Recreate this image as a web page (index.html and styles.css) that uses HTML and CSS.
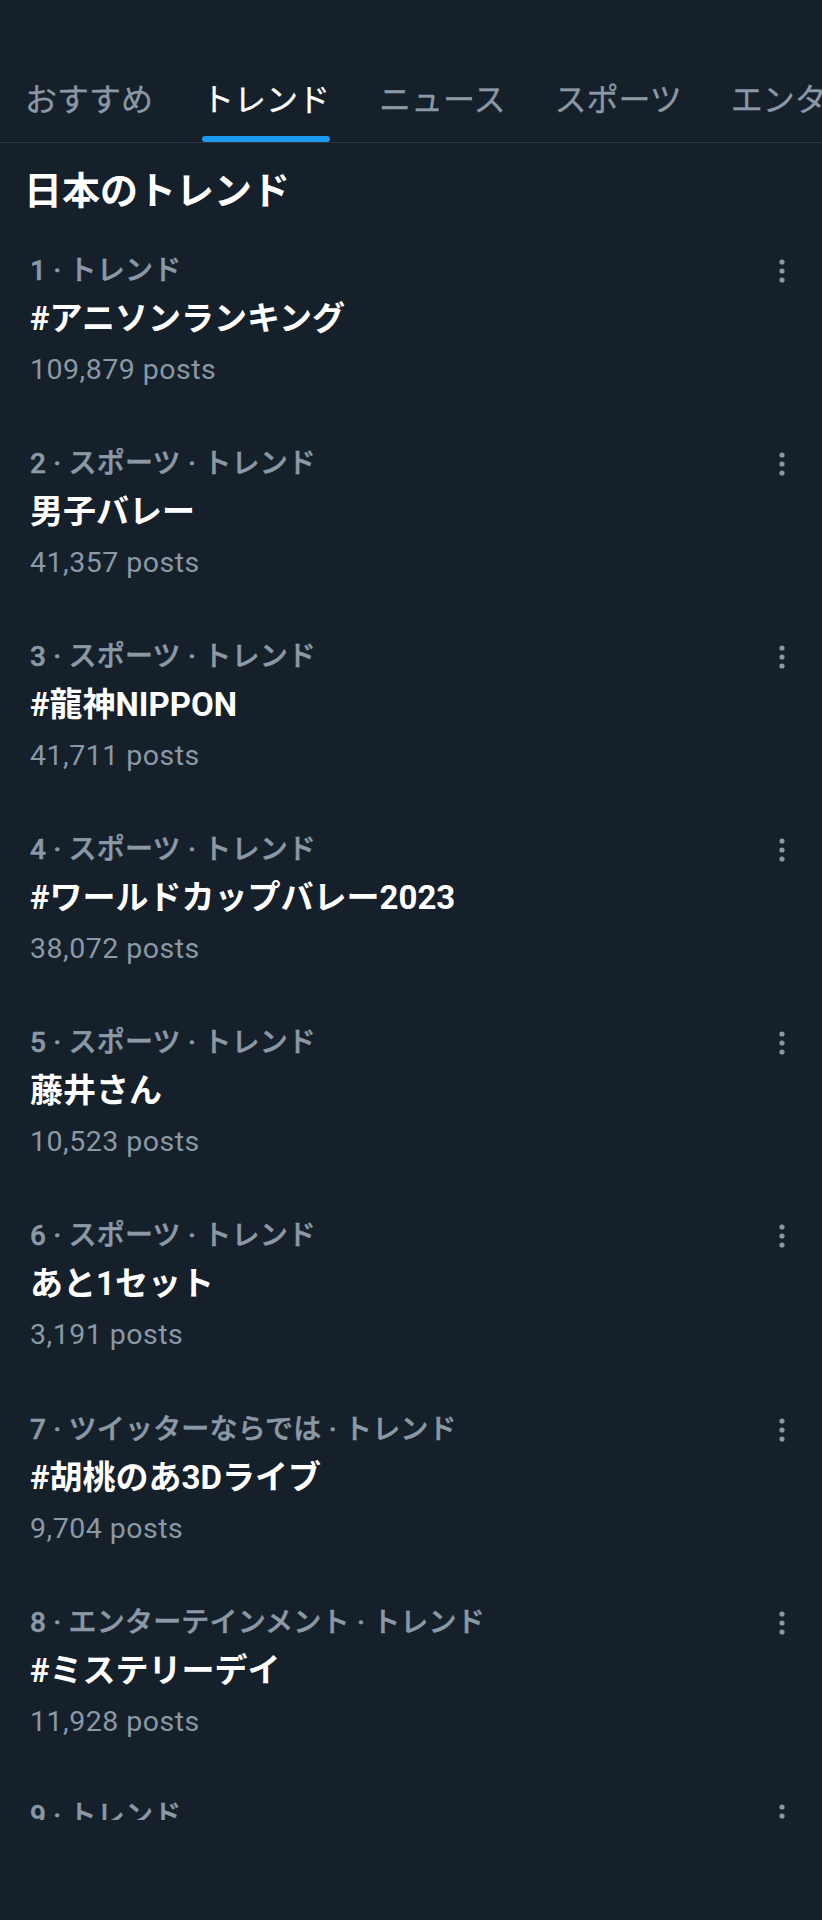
FILE: index.html
```html
<!DOCTYPE html>
<html lang="ja">
<head>
<meta charset="utf-8">
<title>トレンド</title>
<link rel="stylesheet" href="styles.css">
</head>
<body>
<div class="page">
  <nav class="tabs">
    <div class="tab"><span class="tab-label">おすすめ</span><span class="tab-bar"></span></div>
    <div class="tab active"><span class="tab-label">トレンド</span><span class="tab-bar"></span></div>
    <div class="tab"><span class="tab-label">ニュース</span><span class="tab-bar"></span></div>
    <div class="tab"><span class="tab-label">スポーツ</span><span class="tab-bar"></span></div>
    <div class="tab"><span class="tab-label">エンタメ</span><span class="tab-bar"></span></div>
  </nav>
  <h1 class="section-title">日本のトレンド</h1>
  <ul class="trends">
    <li class="trend">
      <div class="meta-row"><span class="meta">1 · トレンド</span><svg class="more" viewBox="0 0 10 24" width="10" height="24"><circle cx="5" cy="3" r="2.6"/><circle cx="5" cy="12" r="2.6"/><circle cx="5" cy="21" r="2.6"/></svg></div>
      <div class="name">#アニソンランキング</div>
      <div class="count">109,879 posts</div>
    </li>
    <li class="trend">
      <div class="meta-row"><span class="meta">2 · スポーツ · トレンド</span><svg class="more" viewBox="0 0 10 24" width="10" height="24"><circle cx="5" cy="3" r="2.6"/><circle cx="5" cy="12" r="2.6"/><circle cx="5" cy="21" r="2.6"/></svg></div>
      <div class="name">男子バレー</div>
      <div class="count">41,357 posts</div>
    </li>
    <li class="trend">
      <div class="meta-row"><span class="meta">3 · スポーツ · トレンド</span><svg class="more" viewBox="0 0 10 24" width="10" height="24"><circle cx="5" cy="3" r="2.6"/><circle cx="5" cy="12" r="2.6"/><circle cx="5" cy="21" r="2.6"/></svg></div>
      <div class="name">#龍神NIPPON</div>
      <div class="count">41,711 posts</div>
    </li>
    <li class="trend">
      <div class="meta-row"><span class="meta">4 · スポーツ · トレンド</span><svg class="more" viewBox="0 0 10 24" width="10" height="24"><circle cx="5" cy="3" r="2.6"/><circle cx="5" cy="12" r="2.6"/><circle cx="5" cy="21" r="2.6"/></svg></div>
      <div class="name">#ワールドカップバレー2023</div>
      <div class="count">38,072 posts</div>
    </li>
    <li class="trend">
      <div class="meta-row"><span class="meta">5 · スポーツ · トレンド</span><svg class="more" viewBox="0 0 10 24" width="10" height="24"><circle cx="5" cy="3" r="2.6"/><circle cx="5" cy="12" r="2.6"/><circle cx="5" cy="21" r="2.6"/></svg></div>
      <div class="name">藤井さん</div>
      <div class="count">10,523 posts</div>
    </li>
    <li class="trend">
      <div class="meta-row"><span class="meta">6 · スポーツ · トレンド</span><svg class="more" viewBox="0 0 10 24" width="10" height="24"><circle cx="5" cy="3" r="2.6"/><circle cx="5" cy="12" r="2.6"/><circle cx="5" cy="21" r="2.6"/></svg></div>
      <div class="name">あと1セット</div>
      <div class="count">3,191 posts</div>
    </li>
    <li class="trend">
      <div class="meta-row"><span class="meta">7 · ツイッターならでは · トレンド</span><svg class="more" viewBox="0 0 10 24" width="10" height="24"><circle cx="5" cy="3" r="2.6"/><circle cx="5" cy="12" r="2.6"/><circle cx="5" cy="21" r="2.6"/></svg></div>
      <div class="name">#胡桃のあ3Dライブ</div>
      <div class="count">9,704 posts</div>
    </li>
    <li class="trend">
      <div class="meta-row"><span class="meta">8 · エンターテインメント · トレンド</span><svg class="more" viewBox="0 0 10 24" width="10" height="24"><circle cx="5" cy="3" r="2.6"/><circle cx="5" cy="12" r="2.6"/><circle cx="5" cy="21" r="2.6"/></svg></div>
      <div class="name">#ミステリーデイ</div>
      <div class="count">11,928 posts</div>
    </li>
    <li class="trend">
      <div class="meta-row"><span class="meta">9 · トレンド</span><svg class="more" viewBox="0 0 10 24" width="10" height="24"><circle cx="5" cy="3" r="2.6"/><circle cx="5" cy="12" r="2.6"/><circle cx="5" cy="21" r="2.6"/></svg></div>
      <div class="name">&nbsp;</div>
      <div class="count">&nbsp;</div>
    </li>
  </ul>
</div>
</body>
</html>
```

FILE: styles.css
```css
html, body {
  margin: 0;
  padding: 0;
  background: #15202b;
}

body {
  font-family: Roboto, "Noto Sans CJK JP", sans-serif;
  color: #ffffff;
}

.page {
  height: 1820px;
  overflow: hidden;
  background: #15202b;
}

.tabs {
  display: flex;
  align-items: flex-end;
  gap: 49px;
  height: 142px;
  padding: 0 0 0 25px;
  border-bottom: 1px solid #2c3743;
  overflow: hidden;
  white-space: nowrap;
}

.tab {
  display: flex;
  flex-direction: column;
  flex-shrink: 0;
}

.tab-label {
  font-family: "Noto Sans CJK JP", sans-serif;
  font-size: 32px;
  line-height: 40px;
  font-weight: 400;
  -webkit-text-stroke: 0.3px currentColor;
  color: #8b98a5;
}

.tab-bar {
  display: block;
  height: 6px;
  margin-top: 19px;
  border-radius: 3px;
  background: transparent;
}

.tab.active .tab-label {
  color: #ffffff;
}

.tab.active .tab-bar {
  background: #1d9bf0;
}

.section-title {
  margin: 21px 0 0 0;
  padding-left: 24px;
  font-family: "Noto Sans CJK JP", sans-serif;
  font-size: 38px;
  line-height: 48px;
  font-weight: 700;
  color: #ffffff;
}

.trends {
  list-style: none;
  margin: 0;
  padding: 41px 0 0 0;
}

.trend {
  padding: 0 35px 56.1px 30px;
}

.meta-row {
  display: flex;
  align-items: center;
  justify-content: space-between;
  height: 36px;
}

.meta {
  font-family: Roboto, "Noto Sans CJK JP", sans-serif;
  font-size: 28px;
  line-height: 36px;
  font-weight: 500;
  -webkit-text-stroke: 0.5px currentColor;
  letter-spacing: 0.2px;
  color: #8b98a5;
  white-space: nowrap;
}

.more {
  display: block;
  fill: #8b98a5;
  flex-shrink: 0;
}

.name {
  margin-top: 7px;
  font-family: Roboto, "Noto Sans CJK JP", sans-serif;
  font-size: 33px;
  line-height: 46px;
  font-weight: 700;
  color: #ffffff;
  white-space: nowrap;
}

.count {
  margin-top: 8px;
  font-family: Roboto, sans-serif;
  font-size: 28.5px;
  line-height: 40px;
  font-weight: 400;
  letter-spacing: 0.5px;
  color: #8b98a5;
}
```
